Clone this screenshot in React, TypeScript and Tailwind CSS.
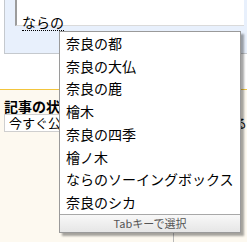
import React from 'react';

const suggestions: string[] = [
  '奈良の都',
  '奈良の大仏',
  '奈良の鹿',
  '檜木',
  '奈良の四季',
  '檜ノ木',
  'ならのソーイングボックス',
  '奈良のシカ',
];

const App: React.FC = () => {
  return (
    <div className="relative w-[247px] h-[242px] overflow-hidden bg-white text-black font-['Noto_Sans_CJK_JP','Noto_Sans',sans-serif]">
      {/* 入力パネル */}
      <div className="ml-[4px] h-[54px] bg-[#e8f0fc] border-l border-b border-[#c5c9ce] pl-[10px] pr-[3px]">
        <div className="h-[26px] bg-white border-l-2 border-l-[#9c9c9c] border-b border-b-[#dadada] pl-[5px] pt-[9px]">
          <span className="inline-block text-[14px] leading-[14px] pb-[1px] border-b border-dotted border-black">
            ならの
          </span>
        </div>
      </div>

      {/* 記事の状態 */}
      <div className="mt-[35px] border-t border-[#f2c53d] bg-[#fdf9f0] h-[200px] pt-[9px]">
        <div className="pl-[4px] text-[14px] leading-[14px] font-bold">記事の状態</div>
        <div className="flex items-start mt-[1px]">
          <div className="ml-[4px] w-[232px] h-[18px] bg-white border border-[#cfcfcf] pl-[4px] text-[13px] leading-[16px]">
            今すぐ公開
          </div>
          <span className="ml-[4px] text-[13px] leading-[18px]">る</span>
        </div>
        <div className="ml-[173px] mt-[101px] w-px h-[12px] bg-[#b8b8b8]" />
      </div>

      {/* 候補リスト */}
      <div className="absolute left-[59px] top-[31px] w-[182px] bg-white border border-[#9a9a9a] shadow-[3px_3px_2px_rgba(0,0,0,0.35)]">
        <ul>
          {suggestions.map((s) => (
            <li key={s} className="pl-[6px] text-[14px] leading-[22.7px] whitespace-nowrap">
              {s}
            </li>
          ))}
        </ul>
        <div className="h-[18px] border-t border-[#a8a8a8] bg-gradient-to-b from-[#f8f8f8] to-[#e6e6e6] text-center text-[11px] leading-[17px] text-[#555]">
          Tabキーで選択
        </div>
      </div>
    </div>
  );
};

export default App;
